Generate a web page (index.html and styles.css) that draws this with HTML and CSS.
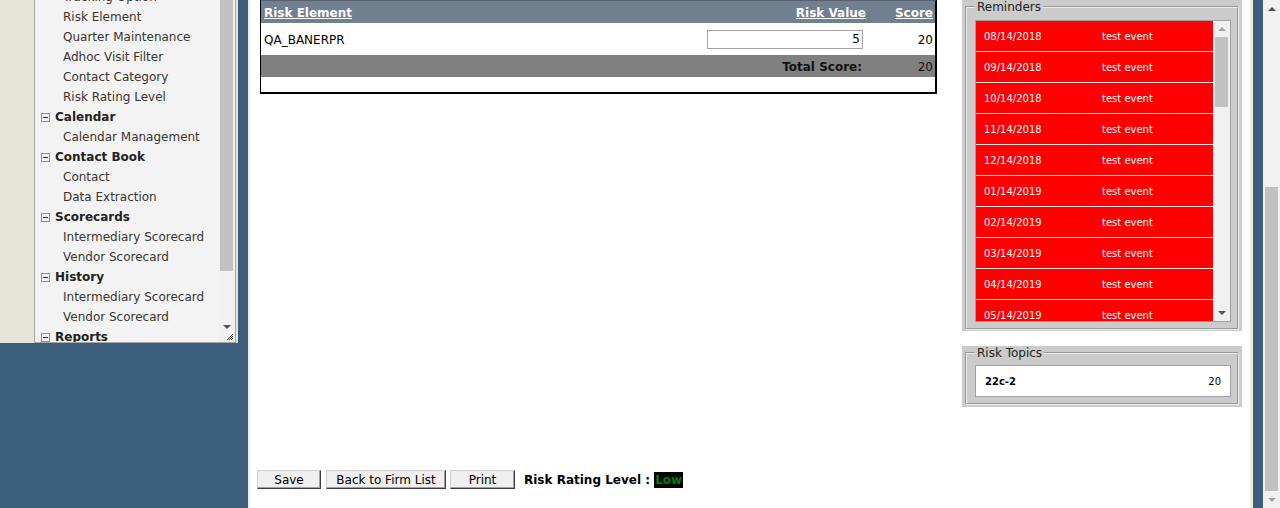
FILE: index.html
```html
<!DOCTYPE html>
<html>
<head>
<meta charset="utf-8">
<title>Risk Scorecard</title>
<link rel="stylesheet" href="styles.css">
</head>
<body>
<div class="page">
  <div class="left">
    <div class="navtop">
      <div class="sidebar">
        <ul class="tree">
          <li class="sub">Tracking Option</li>
          <li class="sub">Risk Element</li>
          <li class="sub">Quarter Maintenance</li>
          <li class="sub">Adhoc Visit Filter</li>
          <li class="sub">Contact Category</li>
          <li class="sub">Risk Rating Level</li>
          <li class="head"><svg class="minus" width="9" height="9" viewBox="0 0 9 9"><rect x="0.5" y="0.5" width="8" height="8" fill="#eef1f5" stroke="#7f95ab"/><line x1="2" y1="4.5" x2="7" y2="4.5" stroke="#1f2f45"/></svg>Calendar</li>
          <li class="sub">Calendar Management</li>
          <li class="head"><svg class="minus" width="9" height="9" viewBox="0 0 9 9"><rect x="0.5" y="0.5" width="8" height="8" fill="#eef1f5" stroke="#7f95ab"/><line x1="2" y1="4.5" x2="7" y2="4.5" stroke="#1f2f45"/></svg>Contact Book</li>
          <li class="sub">Contact</li>
          <li class="sub">Data Extraction</li>
          <li class="head"><svg class="minus" width="9" height="9" viewBox="0 0 9 9"><rect x="0.5" y="0.5" width="8" height="8" fill="#eef1f5" stroke="#7f95ab"/><line x1="2" y1="4.5" x2="7" y2="4.5" stroke="#1f2f45"/></svg>Scorecards</li>
          <li class="sub">Intermediary Scorecard</li>
          <li class="sub">Vendor Scorecard</li>
          <li class="head"><svg class="minus" width="9" height="9" viewBox="0 0 9 9"><rect x="0.5" y="0.5" width="8" height="8" fill="#eef1f5" stroke="#7f95ab"/><line x1="2" y1="4.5" x2="7" y2="4.5" stroke="#1f2f45"/></svg>History</li>
          <li class="sub">Intermediary Scorecard</li>
          <li class="sub">Vendor Scorecard</li>
          <li class="head"><svg class="minus" width="9" height="9" viewBox="0 0 9 9"><rect x="0.5" y="0.5" width="8" height="8" fill="#eef1f5" stroke="#7f95ab"/><line x1="2" y1="4.5" x2="7" y2="4.5" stroke="#1f2f45"/></svg>Reports</li>
        </ul>
        <div class="vscroll">
          <div class="sb-thumb"></div>
          <div class="sb-down"><span class="tri-down dark"></span></div>
        </div>
        <svg class="grip" width="8" height="8" viewBox="0 0 8 8"><path d="M7 1 L1 7 M7 3 L3 7 M7 5 L5 7" stroke="#333" stroke-width="1"/></svg>
      </div>
    </div>
  </div>

  <main class="main">
    <div class="leftpane">
      <div class="risk-table">
        <div class="row thead">
          <div class="c1"><a>Risk Element</a></div>
          <div class="c2"><a>Risk Value</a></div>
          <div class="c3"><a>Score</a></div>
        </div>
        <div class="row trow">
          <div class="c1">QA_BANERPR</div>
          <div class="c2"><span class="field">5</span></div>
          <div class="c3">20</div>
        </div>
        <div class="row ttotal">
          <div class="c1"></div>
          <div class="c2">Total Score:</div>
          <div class="c3">20</div>
        </div>
        <div class="tblank"></div>
      </div>

      <div class="actions">
        <button class="btn w-save">Save</button>
        <button class="btn w-back">Back to Firm List</button>
        <button class="btn w-print">Print</button>
        <span class="rating">Risk Rating Level : <span class="low">Low</span></span>
      </div>
    </div>

    <aside class="rightpane">
      <div class="panel">
        <fieldset>
          <legend>Reminders</legend>
          <div class="rem-box">
            <div class="rem-list">
              <div class="rem-row"><span class="rem-date">08/14/2018</span><span>test event</span></div>
              <div class="rem-row"><span class="rem-date">09/14/2018</span><span>test event</span></div>
              <div class="rem-row"><span class="rem-date">10/14/2018</span><span>test event</span></div>
              <div class="rem-row"><span class="rem-date">11/14/2018</span><span>test event</span></div>
              <div class="rem-row"><span class="rem-date">12/14/2018</span><span>test event</span></div>
              <div class="rem-row"><span class="rem-date">01/14/2019</span><span>test event</span></div>
              <div class="rem-row"><span class="rem-date">02/14/2019</span><span>test event</span></div>
              <div class="rem-row"><span class="rem-date">03/14/2019</span><span>test event</span></div>
              <div class="rem-row"><span class="rem-date">04/14/2019</span><span>test event</span></div>
              <div class="rem-row"><span class="rem-date">05/14/2019</span><span>test event</span></div>
            </div>
            <div class="rem-scroll">
              <div class="rs-up"><span class="tri-up light"></span></div>
              <div class="rs-thumb"></div>
              <div class="rs-down"><span class="tri-down dark"></span></div>
            </div>
          </div>
        </fieldset>
      </div>

      <div class="panel panel-topics">
        <fieldset>
          <legend>Risk Topics</legend>
          <div class="topic-box">
            <span class="topic-name">22c-2</span>
            <span class="topic-score">20</span>
          </div>
        </fieldset>
      </div>
    </aside>
  </main>

  <div class="edge">
    <div class="edge-beige"></div>
    <div class="edge-blue"></div>
    <div class="pagescroll">
      <div class="ps-up"><span class="tri-up dark"></span></div>
      <div class="ps-track"><div class="ps-thumb"></div></div>
      <div class="ps-down"><span class="tri-down light"></span></div>
    </div>
  </div>
</div>
</body>
</html>
```

FILE: styles.css
```css
* { box-sizing: border-box; }
html, body { margin: 0; padding: 0; height: 100%; overflow: hidden; }
body {
  font-family: "DejaVu Sans", Verdana, sans-serif;
  font-size: 12px;
  color: #000;
  background: #fff;
}
.page { display: flex; width: 1280px; height: 508px; }

/* ---------- left navigation ---------- */
.left {
  width: 250px;
  flex: none;
  background: #3b5e7b;
  border-right: 2px solid #efeee3;
}
.navtop {
  width: 238px;
  height: 343px;
  background: #e5e5d8;
  padding: 0 2px 0 34px;
}
.sidebar {
  height: 100%;
  background: #f3f3f3;
  border: 1px solid #a7a7a7;
  border-top: none;
  display: flex;
  position: relative;
}
.tree {
  flex: 1;
  list-style: none;
  margin: -13px 0 0;
  padding: 0;
  overflow: hidden;
}
.tree li { height: 20px; line-height: 20px; white-space: nowrap; }
.sub { padding-left: 28px; color: #3a3530; }
.head {
  padding-left: 6px;
  font-weight: bold;
  color: #222;
  display: flex;
  align-items: center;
  gap: 5px;
}
.minus { flex: none; }
.vscroll {
  width: 17px;
  flex: none;
  background: #f1f1f1;
  display: flex;
  flex-direction: column;
  padding: 0 2px;
}
.sb-thumb { height: 271px; background: #c1c1c1; }
.sb-down {
  margin-top: auto;
  height: 22px;
  display: flex;
  justify-content: center;
  padding-top: 5px;
}
.grip { position: absolute; right: 1px; bottom: 1px; }

/* triangles */
.tri-up, .tri-down {
  display: block;
  width: 0; height: 0;
  border-left: 4px solid transparent;
  border-right: 4px solid transparent;
}
.tri-up { border-bottom: 4px solid #505050; }
.tri-down { border-top: 4px solid #505050; }
.tri-up.light { border-bottom-color: #a3a3a3; }
.tri-down.light { border-top-color: #a3a3a3; }

/* ---------- main ---------- */
.main {
  width: 1000px;
  flex: none;
  background: #fff;
  display: flex;
}
.leftpane { flex: 1; display: flex; flex-direction: column; }

.risk-table {
  width: 677px;
  margin-left: 10px;
  border-style: solid;
  border-color: #55606c #000 #000 #000;
  border-width: 1px 2px 2px 1px;
}
.row {
  display: grid;
  grid-template-columns: 1fr 160px 69px;
  align-items: center;
  padding-top: 2px;
}
.c1 { padding-left: 3px; }
.c2 { text-align: right; }
.c3 { text-align: right; padding-right: 2px; }
.thead {
  height: 22px;
  background: #708090;
  color: #fff;
  font-weight: bold;
}
.thead a { color: #fff; text-decoration: underline; }
.trow { height: 32px; background: #fff; padding-top: 0; }
.trow .c1, .trow .c3 { padding-top: 2px; }
.field {
  display: block;
  width: 156px;
  height: 19px;
  margin-left: 1px;
  border: 1px solid #a4a4a4;
  background: #fff;
  text-align: right;
  padding-right: 2px;
  line-height: 17px;
}
.ttotal { height: 22px; background: #808080; color: #111; }
.ttotal .c2 { font-weight: bold; padding-right: 4px; }
.tblank { height: 15px; background: #fff; }

.actions {
  margin: auto 0 19px 7px;
  display: flex;
  align-items: center;
}
.btn {
  height: 19px;
  font-family: "DejaVu Sans", Verdana, sans-serif;
  font-size: 12px;
  color: #000;
  background: #efefef;
  border: 1px solid;
  border-color: #d0d0d0 #3c3c3c #3c3c3c #d0d0d0;
  box-shadow: inset -1px -1px 0 #a0a0a0;
  padding: 0;
  margin: 0;
}
.w-save { width: 64px; margin-right: 5px; }
.w-back { width: 120px; margin-right: 4px; }
.w-print { width: 65px; margin-right: 9px; }
.rating { font-weight: bold; display: flex; align-items: center; white-space: pre; }
.low {
  background: #000;
  color: #008000;
  height: 16px;
  line-height: 16px;
  padding: 0 1px;
}

/* ---------- right pane ---------- */
.rightpane { width: 280px; flex: none; margin: 0 8px 0 25px; }
.panel { background: #cbcbcb; padding: 0 3px 1px; }
.panel-topics { margin-top: 15px; padding-bottom: 2px; }
fieldset {
  margin: 0;
  border: 2px groove #ececec;
  padding: 6px 6px 6px 8px;
}
.panel-topics fieldset { padding-top: 5px; }
legend {
  padding: 1px 2px 0;
  font-size: 12px;
  line-height: 13px;
  color: #222;
}
.rem-box {
  height: 302px;
  border: 1px solid #a0a0a0;
  background: #f0f0f0;
  display: flex;
}
.rem-list { flex: 1; overflow: hidden; }
.rem-row {
  display: flex;
  align-items: center;
  height: 31px;
  background: #ff0000;
  border-bottom: 1px solid #e4e4e4;
  color: #fff;
  font-size: 10px;
}
.rem-date { width: 126px; padding-left: 8px; flex: none; }
.rem-scroll {
  width: 17px;
  flex: none;
  background: #f0f0f0;
  display: flex;
  flex-direction: column;
  padding: 0 2px;
}
.rs-up { height: 16px; display: flex; justify-content: center; align-items: center; }
.rs-thumb { height: 70px; background: #c1c1c1; }
.rs-down { margin-top: auto; height: 17px; display: flex; justify-content: center; align-items: center; }

.topic-box {
  height: 32px;
  border: 1px solid #a0a0a0;
  background: #fff;
  display: flex;
  align-items: center;
  justify-content: space-between;
  padding: 0 9px;
  font-size: 10px;
}
.topic-name { font-weight: bold; }

/* ---------- right edge ---------- */
.edge { width: 30px; flex: none; display: flex; }
.edge-beige { width: 3px; background: #ecebdf; }
.edge-blue { width: 10px; background: #3b5e7b; }
.pagescroll {
  width: 17px;
  background: #f1f1f1;
  display: flex;
  flex-direction: column;
}
.ps-up, .ps-down { height: 17px; display: flex; justify-content: center; align-items: center; }
.ps-track { flex: 1; padding: 0 2px; }
.ps-thumb { margin-top: 170px; height: 304px; background: #c1c1c1; }
```
